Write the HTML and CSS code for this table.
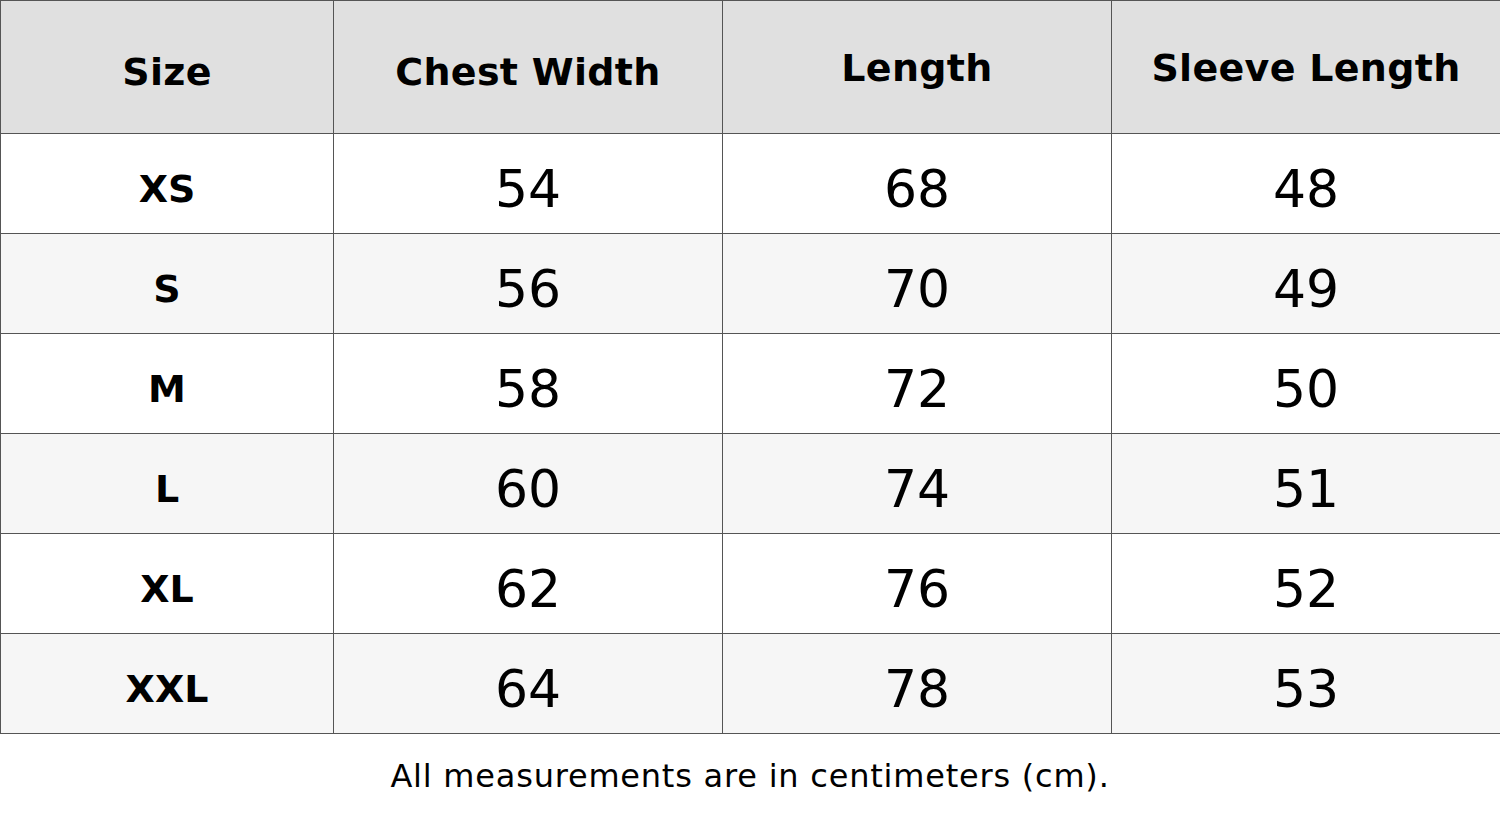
FILE: index.html
```html
<!DOCTYPE html>
<html lang="en">
<head>
<meta charset="utf-8">
<title>Size Chart</title>
<link rel="stylesheet" href="styles.css">
</head>
<body>
<div class="chart">
  <div class="table">
    <div class="cell head">Size</div>
    <div class="cell head">Chest Width</div>
    <div class="cell head high">Length</div>
    <div class="cell head high">Sleeve Length</div>

    <div class="cell size">XS</div>
    <div class="cell num">54</div>
    <div class="cell num">68</div>
    <div class="cell num">48</div>

    <div class="cell size alt">S</div>
    <div class="cell num alt">56</div>
    <div class="cell num alt">70</div>
    <div class="cell num alt">49</div>

    <div class="cell size">M</div>
    <div class="cell num">58</div>
    <div class="cell num">72</div>
    <div class="cell num">50</div>

    <div class="cell size alt">L</div>
    <div class="cell num alt">60</div>
    <div class="cell num alt">74</div>
    <div class="cell num alt">51</div>

    <div class="cell size">XL</div>
    <div class="cell num">62</div>
    <div class="cell num">76</div>
    <div class="cell num">52</div>

    <div class="cell size alt last">XXL</div>
    <div class="cell num alt last">64</div>
    <div class="cell num alt last">78</div>
    <div class="cell num alt last">53</div>
  </div>
  <p class="note">All measurements are in centimeters (cm).</p>
</div>
</body>
</html>
```

FILE: styles.css
```css
html, body {
  margin: 0;
  padding: 0;
  background: #ffffff;
  overflow: hidden;
}

body {
  font-family: "DejaVu Sans", "Noto Sans", sans-serif;
  color: #000000;
  width: 1500px;
  height: 817px;
}

.table {
  display: grid;
  grid-template-columns: 333px 389px 389px 389px;
  grid-template-rows: 133px repeat(5, 100px) 101px;
}

.cell {
  box-sizing: border-box;
  border-left: 1px solid #555555;
  border-top: 1px solid #555555;
  display: flex;
  align-items: center;
  justify-content: center;
  padding-top: 10px;
  background: #ffffff;
  white-space: nowrap;
}

.cell.alt {
  background: #f6f6f6;
}

.cell.last {
  border-bottom: 1px solid #555555;
}

.head {
  background: #e0e0e0;
  font-weight: bold;
  font-size: 38px;
  letter-spacing: 0.3px;
}

.head.high {
  padding-top: 2px;
}

.size {
  font-weight: bold;
  font-size: 38px;
}

.num {
  font-size: 52px;
}

.note {
  margin: 0;
  padding-top: 23px;
  text-align: center;
  font-size: 32px;
  letter-spacing: 0.78px;
}
```
